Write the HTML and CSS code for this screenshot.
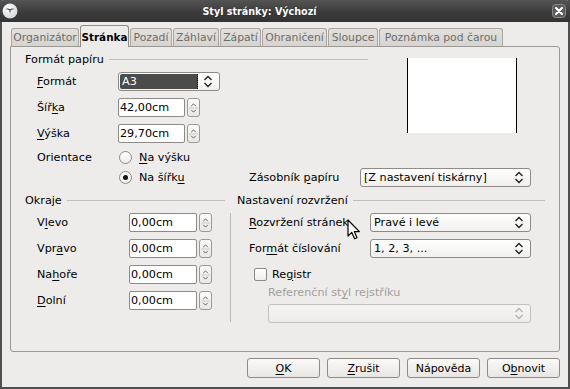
FILE: index.html
```html
<!DOCTYPE html>
<html lang="cs">
<head>
<meta charset="utf-8">
<title>Styl stránky: Výchozí</title>
<link rel="stylesheet" href="styles.css">
</head>
<body>
<div class="window">
  <div class="titlebar">
    <span class="app-icon">
      <svg width="16" height="16" viewBox="0 0 16 16">
        <defs><radialGradient id="g1" cx="0.4" cy="0.35" r="0.7"><stop offset="0" stop-color="#ffffff"/><stop offset="1" stop-color="#cfd3d8"/></radialGradient></defs>
        <circle cx="8" cy="8" r="7.5" fill="url(#g1)"/>
        <path d="M3.5 6.2 C5 5 6.5 5.2 8 6.6 C9.5 5.2 11 5 12.5 6.2 C11 6 9.6 6.4 8.4 7.6 L8 8.4 L7.6 7.6 C6.4 6.4 5 6 3.5 6.2 Z" fill="#2a2a2a"/>
        <path d="M7.2 8.2 L8 10 L8.8 8.2 Z" fill="#2a2a2a"/>
      </svg>
    </span>
    <span class="title">Styl stránky: Výchozí</span>
    <span class="close">
      <svg width="14" height="14" viewBox="0 0 14 14">
        <rect x="0.5" y="0.5" width="13" height="13" rx="3" fill="#5a5a5a" stroke="#8a8a8a"/>
        <path d="M4 4 L10 10 M10 4 L4 10" stroke="#ffffff" stroke-width="2.2" stroke-linecap="round"/>
      </svg>
    </span>
  </div>
  <div class="content">
    <div class="tabs">
      <div class="tab">Organizátor</div>
      <div class="tab active">Stránka</div>
      <div class="tab">Pozadí</div>
      <div class="tab">Záhlaví</div>
      <div class="tab">Zápatí</div>
      <div class="tab">Ohraničení</div>
      <div class="tab">Sloupce</div>
      <div class="tab">Poznámka pod čarou</div>
    </div>
    <div class="panel">
      <div class="top">
        <div class="paper">
          <div class="heading"><span>Formát papíru</span><i class="rule"></i></div>
          <div class="row first">
            <span class="lbl lbl-paper"><u>F</u>ormát</span>
            <div class="combo combo-a3">
              <span class="combo-sel">A3</span>
              <span class="chev">
                <svg width="10" height="13" viewBox="0 0 10 13"><path d="M1.5 5 L5 1.5 L8.5 5 M1.5 8 L5 11.5 L8.5 8" fill="none" stroke="#222" stroke-width="1.4"/></svg>
              </span>
            </div>
          </div>
          <div class="row">
            <span class="lbl lbl-paper">Šíř<u>k</u>a</span>
            <div class="spin">
              <span class="field field-paper">42,00cm</span>
              <span class="spinbtn"><svg width="12" height="18" viewBox="0 0 12 18"><path d="M3.5 7 L6 4.5 L8.5 7 M3.5 11 L6 13.5 L8.5 11" fill="none" stroke="#555" stroke-width="1"/><path d="M1 9 H11" stroke="#c9c6c1"/></svg></span>
            </div>
          </div>
          <div class="row">
            <span class="lbl lbl-paper"><u>V</u>ýška</span>
            <div class="spin">
              <span class="field field-paper">29,70cm</span>
              <span class="spinbtn"><svg width="12" height="18" viewBox="0 0 12 18"><path d="M3.5 7 L6 4.5 L8.5 7 M3.5 11 L6 13.5 L8.5 11" fill="none" stroke="#555" stroke-width="1"/><path d="M1 9 H11" stroke="#c9c6c1"/></svg></span>
            </div>
          </div>
        </div>
        <div class="preview"></div>
      </div>
      <div class="orient">
        <span class="lbl lbl-paper">Orientace</span>
        <span class="radio-line"><span class="radio"></span><span><u>N</u>a výšku</span></span>
        <span></span><span></span>
        <span></span>
        <span class="radio-line"><span class="radio checked"></span><span>Na šířk<u>u</u></span></span>
        <span class="lbl-tray">Zásobník <u>p</u>apíru</span>
        <div class="combo combo-tray">
          <span class="combo-text">[Z nastavení tiskárny]</span>
          <span class="chev"><svg width="10" height="13" viewBox="0 0 10 13"><path d="M1.5 5 L5 1.5 L8.5 5 M1.5 8 L5 11.5 L8.5 8" fill="none" stroke="#222" stroke-width="1.4"/></svg></span>
        </div>
      </div>
      <div class="bottom">
        <div class="margins">
          <div class="heading"><span>Okraje</span><i class="rule"></i></div>
          <div class="row m-first">
            <span class="lbl lbl-margin">V<u>l</u>evo</span>
            <div class="spin"><span class="field field-margin">0,00cm</span><span class="spinbtn"><svg width="12" height="18" viewBox="0 0 12 18"><path d="M3.5 7 L6 4.5 L8.5 7 M3.5 11 L6 13.5 L8.5 11" fill="none" stroke="#555" stroke-width="1"/><path d="M1 9 H11" stroke="#c9c6c1"/></svg></span></div>
          </div>
          <div class="row m-row">
            <span class="lbl lbl-margin">Vpr<u>a</u>vo</span>
            <div class="spin"><span class="field field-margin">0,00cm</span><span class="spinbtn"><svg width="12" height="18" viewBox="0 0 12 18"><path d="M3.5 7 L6 4.5 L8.5 7 M3.5 11 L6 13.5 L8.5 11" fill="none" stroke="#555" stroke-width="1"/><path d="M1 9 H11" stroke="#c9c6c1"/></svg></span></div>
          </div>
          <div class="row m-row">
            <span class="lbl lbl-margin">Na<u>h</u>oře</span>
            <div class="spin"><span class="field field-margin">0,00cm</span><span class="spinbtn"><svg width="12" height="18" viewBox="0 0 12 18"><path d="M3.5 7 L6 4.5 L8.5 7 M3.5 11 L6 13.5 L8.5 11" fill="none" stroke="#555" stroke-width="1"/><path d="M1 9 H11" stroke="#c9c6c1"/></svg></span></div>
          </div>
          <div class="row m-row">
            <span class="lbl lbl-margin"><u>D</u>olní</span>
            <div class="spin"><span class="field field-margin">0,00cm</span><span class="spinbtn"><svg width="12" height="18" viewBox="0 0 12 18"><path d="M3.5 7 L6 4.5 L8.5 7 M3.5 11 L6 13.5 L8.5 11" fill="none" stroke="#555" stroke-width="1"/><path d="M1 9 H11" stroke="#c9c6c1"/></svg></span></div>
          </div>
        </div>
        <div class="vsep"></div>
        <div class="layout">
          <div class="heading"><span>Nastavení rozvržení</span><i class="rule"></i></div>
          <div class="row m-first">
            <span class="lbl lbl-layout"><u>R</u>ozvržení stránek</span>
            <div class="combo combo-layout">
              <span class="combo-text">Pravé i levé</span>
              <span class="chev"><svg width="10" height="13" viewBox="0 0 10 13"><path d="M1.5 5 L5 1.5 L8.5 5 M1.5 8 L5 11.5 L8.5 8" fill="none" stroke="#222" stroke-width="1.4"/></svg></span>
            </div>
          </div>
          <div class="row m-row">
            <span class="lbl lbl-layout">For<u>m</u>át číslování</span>
            <div class="combo combo-layout">
              <span class="combo-text">1, 2, 3, ...</span>
              <span class="chev"><svg width="10" height="13" viewBox="0 0 10 13"><path d="M1.5 5 L5 1.5 L8.5 5 M1.5 8 L5 11.5 L8.5 8" fill="none" stroke="#222" stroke-width="1.4"/></svg></span>
            </div>
          </div>
          <div class="check-line">
            <span class="checkbox"></span><span>Re<u>g</u>istr</span>
          </div>
          <div class="ref-label">Referenční st<u>y</u>l rejstříku</div>
          <div class="combo combo-disabled">
            <span class="combo-text"></span>
            <span class="chev"><svg width="10" height="13" viewBox="0 0 10 13"><path d="M1.5 5 L5 1.5 L8.5 5 M1.5 8 L5 11.5 L8.5 8" fill="none" stroke="#b9b6b1" stroke-width="1.4"/></svg></span>
          </div>
        </div>
      </div>
    </div>
    <div class="buttons">
      <button class="btn"><u>O</u>K</button>
      <button class="btn"><u>Z</u>rušit</button>
      <button class="btn">Nápověda</button>
      <button class="btn">O<u>b</u>novit</button>
    </div>
  </div>
  <svg class="cursor" width="14" height="22" viewBox="0 0 14 22">
    <path d="M1 1 L1 17 L4.8 13.4 L7.6 19.8 L10 18.8 L7.3 12.6 L12.4 12.6 Z" fill="#ffffff" stroke="#000" stroke-width="1.2" stroke-linejoin="round"/>
  </svg>
</div>
</body>
</html>
```

FILE: styles.css
```css
* { box-sizing: border-box; }

html, body {
  margin: 0;
  padding: 0;
  width: 570px;
  height: 389px;
  overflow: hidden;
  background: #edeceb;
}

body {
  font-family: "DejaVu Sans", "Noto Sans", sans-serif;
  font-size: 11.2px;
  color: #000;
}

u { text-decoration: underline; text-underline-offset: 2px; }

.window {
  position: relative;
  width: 570px;
  height: 389px;
  background: #edeceb;
  border-left: 2px solid #4e4e4e;
  border-right: 2px solid #4e4e4e;
  border-bottom: 2px solid #4e4e4e;
  display: flex;
  flex-direction: column;
}

.titlebar {
  height: 22px;
  margin: 0 -2px;
  background: linear-gradient(#545454, #3a3a3a 60%, #333333);
  border-radius: 4px 4px 0 0;
  display: flex;
  align-items: center;
  padding: 0 4px 0 2px;
  color: #fff;
}

.app-icon { width: 16px; height: 16px; display: flex; }

.title {
  flex: 1;
  text-align: center;
  font-weight: bold;
  font-size: 9.6px;
  padding-right: 51px;
  text-shadow: 0 0 1px #222;
}

.close { width: 14px; height: 14px; display: flex; }

.content {
  flex: 1;
  padding: 3px 8px 0 8px;
  display: flex;
  flex-direction: column;
}

/* tabs */
.tabs {
  display: flex;
  align-items: flex-end;
  height: 22px;
  margin-bottom: -1px;
  position: relative;
  z-index: 1;
}

.tab {
  height: 18px;
  padding: 0;
  margin-right: 1px;
  font-size: 10.8px;
  color: #6e6c69;
  background: linear-gradient(#e3e1de, #d6d4d0);
  border: 1px solid #a9a6a1;
  border-bottom: none;
  border-radius: 3px 3px 0 0;
  display: flex;
  align-items: center;
  justify-content: center;
  margin-bottom: 1px;
  white-space: nowrap;
}

.tab:nth-child(1) { width: 68px; margin-left: 1px; }
.tab:nth-child(2) { width: 49px; }
.tab:nth-child(3) { width: 42px; }
.tab:nth-child(4) { width: 46px; }
.tab:nth-child(5) { width: 41px; }
.tab:nth-child(6) { width: 65px; }
.tab:nth-child(7) { width: 50px; }
.tab:nth-child(8) { width: 124px; }

.tab.active {
  height: 22px;
  margin-bottom: 0;
  color: #000;
  font-weight: bold;
  font-size: 10.4px;
  background: #edeceb;
  border-color: #8f8c87;
}

.panel {
  width: 550px;
  height: 306px;
  border: 1px solid #9c9994;
  border-radius: 0 3px 3px 3px;
  background: #edeceb;
  padding: 5px 14px 0 14px;
}

.heading {
  height: 14px;
  display: flex;
  align-items: center;
  gap: 5px;
  color: #000;
}

.rule {
  flex: 1;
  height: 1px;
  background: #c2bfba;
  margin-top: 1px;
}

.top { display: flex; }

.paper { width: 343px; }

.row {
  display: flex;
  align-items: center;
  height: 19px;
  margin-top: 7px;
}

.row.first { margin-top: 6px; }

.lbl {
  display: block;
  padding-left: 12px;
}

.lbl-paper { width: 93px; }
.lbl-margin { width: 104px; }
.lbl-layout { width: 133px; }

.combo {
  height: 19px;
  border: 1px solid #8e8a85;
  border-radius: 3px;
  background: linear-gradient(#ffffff, #f1f0ee);
  display: flex;
  align-items: center;
  position: relative;
}

.combo-a3 { width: 102px; padding: 1px; }

.combo-sel {
  flex: 1;
  height: 100%;
  background: #4b4b4b;
  color: #fff;
  padding-left: 2px;
  display: flex;
  align-items: center;
  border-right: 1px dotted #000;
  border-radius: 2px 0 0 2px;
}

.chev {
  width: 22px;
  height: 100%;
  display: flex;
  align-items: center;
  justify-content: center;
}

.combo-a3 .chev { width: 20px; }

.combo-text {
  flex: 1;
  padding-left: 3px;
  white-space: nowrap;
}

.combo-tray { width: 171px; }
.combo-layout { width: 161px; height: 19px; }

.combo-disabled {
  width: 263px;
  height: 19px;
  margin-left: 31px;
  margin-top: 4px;
  border-color: #c3c0bb;
  background: linear-gradient(#f6f5f4, #edecea);
}

.spin {
  display: flex;
  align-items: center;
  gap: 2px;
  height: 19px;
}

.field {
  height: 19px;
  background: #fff;
  border: 1px solid #8e8a85;
  border-radius: 2px;
  padding-left: 1px;
  display: flex;
  align-items: center;
}

.field-paper { width: 67px; }
.field-margin { width: 68px; }

.spinbtn {
  width: 13px;
  height: 19px;
  border: 1px solid #9c9994;
  border-radius: 3px;
  background: linear-gradient(#fbfbfa, #e9e7e4);
  display: flex;
  align-items: center;
  justify-content: center;
}

.spinbtn svg { display: block; }

.preview {
  margin-left: 39px;
  margin-top: 6px;
  width: 110px;
  height: 75px;
  background: #fff;
  border-left: 1px solid #000;
  border-right: 1px solid #000;
}

.orient {
  display: grid;
  grid-template-columns: 93px 131px 111px 171px;
  grid-template-rows: 20px 20px;
  align-items: center;
  margin-top: 4px;
}

.radio-line {
  display: flex;
  align-items: center;
  gap: 7px;
  padding-left: 1px;
}

.radio {
  width: 13px;
  height: 13px;
  border: 1px solid #8e8a85;
  border-radius: 50%;
  background: linear-gradient(#ffffff, #eeedeb);
  position: relative;
}

.radio.checked::after {
  content: "";
  position: absolute;
  left: 3px;
  top: 3px;
  width: 5px;
  height: 5px;
  border-radius: 50%;
  background: #111;
}

.bottom {
  display: flex;
  margin-top: 6px;
}

.margins { width: 200px; }

.m-first { margin-top: 6px; }
.m-row { margin-top: 7px; }

.vsep {
  width: 1px;
  height: 109px;
  margin: 20px 6px 0 5px;
  background: #bdbab5;
}

.layout { width: 308px; }

.check-line {
  display: flex;
  align-items: center;
  gap: 5px;
  height: 14px;
  margin-top: 9px;
  padding-left: 17px;
}

.checkbox {
  width: 13px;
  height: 13px;
  border: 1px solid #8e8a85;
  border-radius: 2px;
  background: linear-gradient(#ffffff, #eeedeb);
}

.ref-label {
  height: 14px;
  margin-top: 5px;
  padding-left: 31px;
  color: #a3a09b;
  line-height: 14px;
}

.buttons {
  display: flex;
  justify-content: flex-end;
  gap: 7px;
  margin-top: 6px;
}

.btn {
  width: 73px;
  height: 20px;
  font-family: inherit;
  font-size: 11px;
  color: #000;
  border: 1px solid #8e8a85;
  border-radius: 3px;
  background: linear-gradient(#fbfaf9, #e8e6e3);
  padding: 0;
}

.cursor {
  position: absolute;
  left: 345px;
  top: 219px;
}
```
